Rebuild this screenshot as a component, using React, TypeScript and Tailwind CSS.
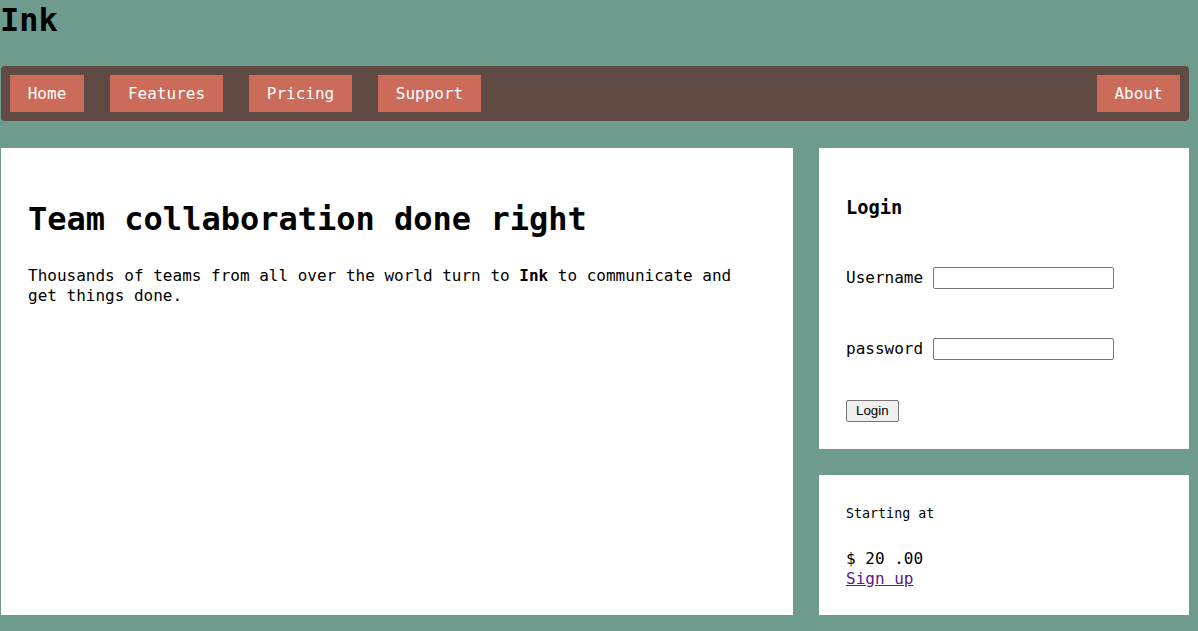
const navLinks = [
  { label: 'Home', w: 'w-[74px]' },
  { label: 'Features', w: 'w-[113px]' },
  { label: 'Pricing', w: 'w-[103px]' },
  { label: 'Support', w: 'w-[103px]' },
];

function NavButton({ label, w }: { label: string; w: string }) {
  return (
    <a href="#" className={`${w} h-[37px] flex items-center justify-center bg-[#cc6b5a] text-white text-[16px] leading-[19px]`}>
      {label}
    </a>
  );
}

export default function App() {
  return (
    <div className="min-h-[631px] w-full bg-[#6f9b8f] font-['DejaVu_Sans_Mono',monospace] text-black">
      <div className="w-[1188px] ml-px">
        <h1 className="text-[32px] leading-[40px] font-bold -ml-px">Ink</h1>

        {/* Top navigation */}
        <nav className="mt-[26px] h-[55px] rounded-[4px] bg-[#5f4b44] px-[9px] flex items-center">
          <div className="flex gap-[26px]">
            {navLinks.map((l) => (
              <NavButton key={l.label} label={l.label} w={l.w} />
            ))}
          </div>
          <div className="ml-auto">
            <NavButton label="About" w="w-[83px]" />
          </div>
        </nav>

        <div className="mt-[27px] flex gap-[26px]">
          <main className="w-[792px] h-[467px] bg-white px-[27px] pt-[27px]">
            <h2 className="mt-[24px] text-[32px] leading-[40px] font-bold">Team collaboration done right</h2>
            <p className="mt-[27px] text-[16px] leading-[20px]">
              Thousands of teams from all over the world turn to <b>Ink</b> to communicate and get things done.
            </p>
          </main>

          <aside className="flex-1 flex flex-col gap-[26px]">
            <div className="bg-white px-[27px] pt-[28px] pb-[27px]">
              <h3 className="mt-[18px] text-[18.72px] leading-[28px] font-bold">Login</h3>
              <div className="mt-[45px] h-[22px] flex items-center gap-[10px] text-[16px]">
                <label>Username</label>
                <input type="text" className="w-[181px] h-[22px] border border-[#767676] rounded-[2px] bg-white" />
              </div>
              <div className="mt-[49px] h-[22px] flex items-center gap-[10px] text-[16px]">
                <label>password</label>
                <input type="password" className="w-[181px] h-[22px] border border-[#767676] rounded-[2px] bg-white" />
              </div>
              <button className="mt-[40px] block h-[22px] px-[9px] bg-[#efefef] border border-[#767676] rounded-[2px] font-['Liberation_Sans',Arial,sans-serif] text-[13.33px] leading-[18px]">
                Login
              </button>
            </div>

            <div className="bg-white px-[27px] pt-[28px] pb-[26px]">
              <p className="mt-[3px] text-[13.33px] leading-[16px]">Starting at</p>
              <p className="mt-[27px] text-[16px] leading-[20px]">$ 20 .00</p>
              <a href="#" className="block w-fit text-[16px] leading-[20px] text-[#551a8b] underline">
                Sign up
              </a>
            </div>
          </aside>
        </div>
      </div>
    </div>
  );
}
